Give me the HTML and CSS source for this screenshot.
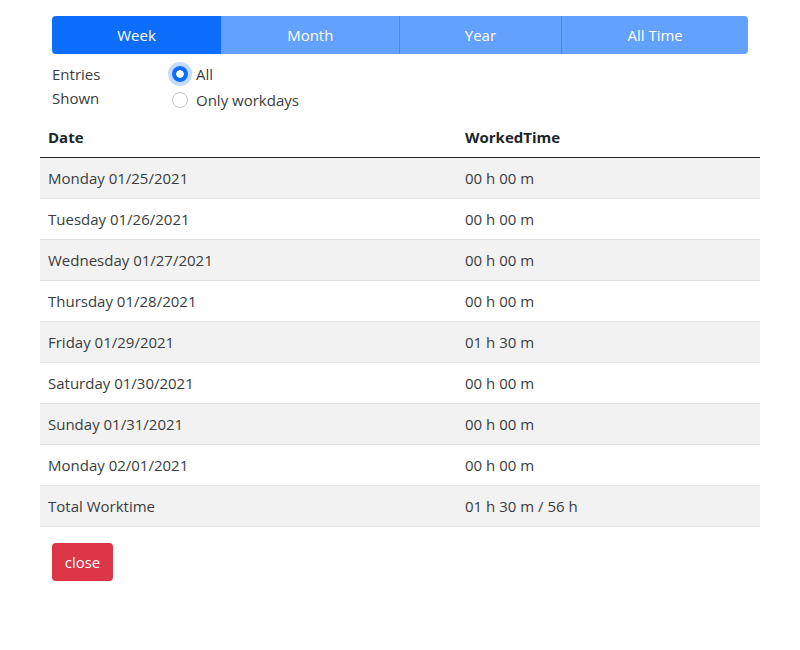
FILE: index.html
```html
<!DOCTYPE html>
<html lang="en">
<head>
<meta charset="utf-8">
<title>Worktime</title>
<link rel="stylesheet" href="styles.css">
</head>
<body>
<div class="container">
  <div class="btn-group">
    <button class="seg seg-active">Week</button>
    <button class="seg">Month</button>
    <button class="seg">Year</button>
    <button class="seg">All Time</button>
  </div>
  <div class="entries">
    <div class="entries-label">Entries<br>Shown</div>
    <div class="options">
      <label class="check"><span class="radio radio-on"></span>All</label>
      <label class="check"><span class="radio"></span>Only workdays</label>
    </div>
  </div>
  <table class="table">
    <thead>
      <tr><th class="col-date">Date</th><th>WorkedTime</th></tr>
    </thead>
    <tbody>
      <tr><td>Monday 01/25/2021</td><td>00 h 00 m</td></tr>
      <tr><td>Tuesday 01/26/2021</td><td>00 h 00 m</td></tr>
      <tr><td>Wednesday 01/27/2021</td><td>00 h 00 m</td></tr>
      <tr><td>Thursday 01/28/2021</td><td>00 h 00 m</td></tr>
      <tr><td>Friday 01/29/2021</td><td>01 h 30 m</td></tr>
      <tr><td>Saturday 01/30/2021</td><td>00 h 00 m</td></tr>
      <tr><td>Sunday 01/31/2021</td><td>00 h 00 m</td></tr>
      <tr><td>Monday 02/01/2021</td><td>00 h 00 m</td></tr>
      <tr><td>Total Worktime</td><td>01 h 30 m / 56 h</td></tr>
    </tbody>
  </table>
  <button class="btn-close">close</button>
</div>
</body>
</html>
```
FILE: styles.css
```css
* { box-sizing: border-box; }
body {
  margin: 0;
  font-family: "Open Sans", "Noto Sans", sans-serif;
  font-size: 15px;
  line-height: 24px;
  color: #3a3d40;
  background: #fff;
}
.container {
  width: 720px;
  margin: 0 auto;
  padding-top: 16px;
}
.btn-group {
  display: flex;
  margin: 0 12px;
  height: 38px;
}
.seg {
  flex: 1 1 auto;
  border: 0;
  padding: 6px 12px;
  font: inherit;
  color: #fff;
  background: #62a1fe;
  border-left: 1px solid #3d8bfd;
}
.seg:first-child {
  border-left: 0;
  border-radius: 4px 0 0 4px;
}
.seg:last-child { border-radius: 0 4px 4px 0; }
.seg-active { background: #0d6efd; }
.seg-active + .seg { border-left-color: #62a1fe; }
.entries {
  display: flex;
  margin: 8px 12px 0;
}
.entries-label { width: 120px; }
.options { display: flex; flex-direction: column; }
.check {
  display: flex;
  align-items: center;
  gap: 8px;
  margin-bottom: 2px;
  height: 24px;
}
.radio {
  width: 16px;
  height: 16px;
  border-radius: 50%;
  border: 1px solid #c4c4c4;
  background: #fff;
}
.radio-on {
  border: 0;
  background: radial-gradient(circle, #fff 0 3.5px, #0d6efd 4px);
  box-shadow: 0 0 0 4px rgba(13, 110, 253, 0.25);
}
.table {
  width: 100%;
  margin-top: 3px;
  border-collapse: collapse;
}
.table th, .table td {
  text-align: left;
  padding: 8px;
  border-bottom: 1px solid #dee2e6;
  font-weight: normal;
}
.table th {
  font-weight: 700;
  color: #212529;
  border-bottom-color: #212529;
}
.col-date { width: 417px; }
.table tbody tr:nth-child(odd) td { background: #f2f2f2; }
.btn-close {
  margin: 16px 12px;
  height: 38px;
  padding: 7px 12px;
  width: 61px;
  border: 0;
  border-radius: 4px;
  background: #dc3545;
  color: #fff;
  font: inherit;
}
```
